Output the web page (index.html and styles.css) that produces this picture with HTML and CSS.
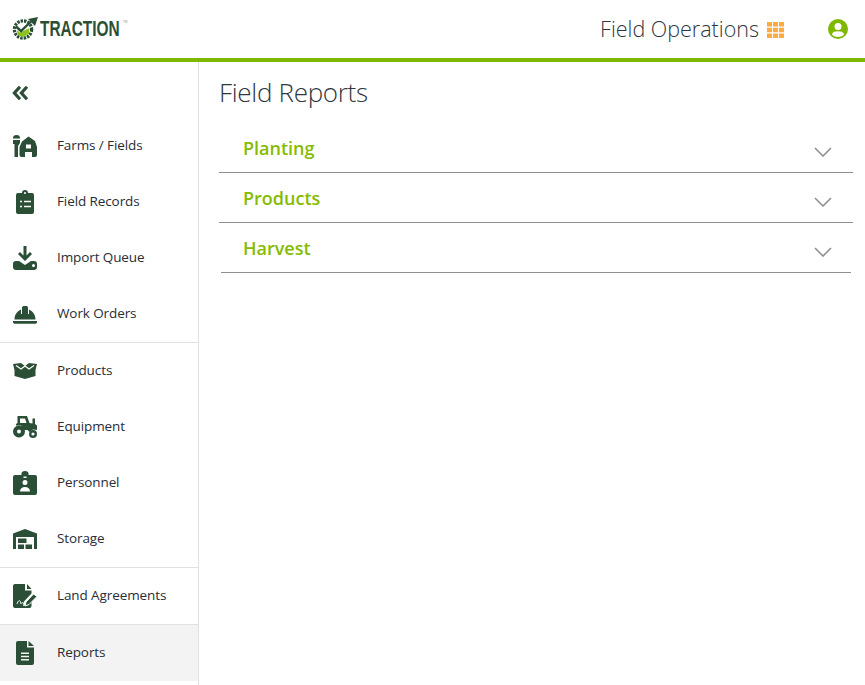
FILE: index.html
```html
<!DOCTYPE html>
<html lang="en">
<head>
    <meta charset="UTF-8">
    <meta name="viewport" content="width=device-width, initial-scale=1.0">
    <title>Field Reports</title>
    <link rel="stylesheet" href="styles.css">
</head>
<body>
    <header class="topbar">
        <div class="logo">
            <svg class="logo-mark" viewBox="0 0 27 23" width="27" height="23">
                <circle cx="11" cy="12.500" r="8.500" fill="none" stroke="#2b4f36" stroke-width="3.500" stroke-dasharray="2.400 1"/>
                <circle cx="11" cy="12.500" r="7" fill="#fff"/>
                <path d="M4.500 13 L8 15.500 L17.500 11 L17 17 L11 20 L6 18 Z" fill="#8cc21f"/>
                <path d="M4 9.500 L9 14 L19 4.500" fill="none" stroke="#2b4f36" stroke-width="2.400"/>
                <path d="M16 2 L26 0 L23 9 Z" fill="#2b4f36"/>
            </svg>
            <span class="logo-text">TRACTION</span><span class="logo-tm">TM</span>
        </div>
        <div class="topbar-right">
            <span class="app-name">Field Operations</span>
            <svg class="grid-icon" viewBox="0 0 17 16" width="17" height="16">
                <path fill="#fbab3f" d="M0 0h5v4.500H0zM6 0h5v4.500H6zM12 0h5v4.500h-5zM0 5.750h5v4.500H0zM6 5.750h5v4.500H6zM12 5.750h5v4.500h-5zM0 11.500h5V16H0zM6 11.500h5V16H6zM12 11.500h5V16h-5z"/>
            </svg>
            <svg class="user-icon" viewBox="0 0 20 20" width="20" height="20">
                <circle cx="10" cy="10" r="10" fill="#7fb800"/>
                <circle cx="10" cy="7.600" r="3.500" fill="#fff"/>
                <path d="M3.800 15.200C5 12.800 7 12.200 10 12.200s5 .6 6.200 3C14.800 16.900 12.600 18 10 18s-4.800-1.100-6.200-2.800z" fill="#fff"/>
            </svg>
        </div>
    </header>

    <div class="layout">
        <nav class="sidebar">
            <div class="collapse">
                <svg viewBox="0 0 17 14" width="17" height="14">
                    <path d="M8 .8 L2.400 7 L8 13.200 M15 .8 L9.400 7 L15 13.200" fill="none" stroke="#2b4f36" stroke-width="3.200"/>
                </svg>
            </div>

            <div class="nav-group">
                <a class="nav-item">
                    <svg class="nav-icon" viewBox="0 0 24 22">
                        <path d="M0 3a3.500 3 0 0 1 7 0v.500H0zM0 5h7v3L5 11v11H1.500V9H0z"/>
                        <path fill-rule="evenodd" d="M6.500 12L9 6.500 15.500 1.500 22 6 24 12v8a2 2 0 0 1-2 2h-3v-5h-7v5H8.500a2 2 0 0 1-2-2zM13 9.500h5v4h-5z"/>
                    </svg>
                    <span>Farms / Fields</span>
                </a>
                <a class="nav-item">
                    <svg class="nav-icon" viewBox="0 0 24 24">
                        <path fill-rule="evenodd" d="M5 3h4a3 3 0 0 1 6 0h4a2 2 0 0 1 2 2v17a2 2 0 0 1-2 2H5a2 2 0 0 1-2-2V5a2 2 0 0 1 2-2zm6 0a1 1 0 1 0 2 0 1 1 0 0 0-2 0zM7 11.500a1 1 0 1 0 2 0 1 1 0 0 0-2 0zM11 10.700v1.500h7v-1.500zM7 16.500a1 1 0 1 0 2 0 1 1 0 0 0-2 0zM11 15.700v1.500h7v-1.500z"/>
                    </svg>
                    <span>Field Records</span>
                </a>
                <a class="nav-item">
                    <svg class="nav-icon" viewBox="0 0 24 24">
                        <path d="M10.500 0h3v9.500l3.500-3.500 2 2-7 7-7-7 2-2 3.500 3.500z"/>
                        <path fill-rule="evenodd" d="M3 15h3l6 4 6-4h3a3 3 0 0 1 3 3v3a3 3 0 0 1-3 3H3a3 3 0 0 1-3-3v-3a3 3 0 0 1 3-3zm16 4.500a1.500 1.500 0 1 0 3 0 1.500 1.500 0 0 0-3 0z"/>
                    </svg>
                    <span>Import Queue</span>
                </a>
                <a class="nav-item">
                    <svg class="nav-icon" viewBox="0 0 24 24">
                        <path d="M1.500 17.500c0-5 3-8.500 6.500-10V12h1V5.500L10 4h4l1 1.500V12h1V7.500c3.500 1.500 6.500 5 6.500 10z"/>
                        <path d="M0 19h24v1c0 1-1 1.800-2 1.800H2C1 21.800 0 21 0 20z"/>
                    </svg>
                    <span>Work Orders</span>
                </a>
            </div>

            <div class="nav-group">
                <a class="nav-item">
                    <svg class="nav-icon" viewBox="0 0 24 24">
                        <path d="M0 5L8 4l4 3 4-3 8 1-1.500 6v6L12 20 1.500 17v-6z"/>
                        <path d="M3 6.500L8 10l4-3 4 3 5-3.500" fill="none" stroke="#fff" stroke-width="1.200"/>
                    </svg>
                    <span>Products</span>
                </a>
                <a class="nav-item">
                    <svg class="nav-icon" viewBox="0 0 24 24">
                        <path fill-rule="evenodd" d="M4.500 1h9.500l2.500 7 3 .5V3.500h2.500V9l2 1.500V15l-4-.5-3.500 2.500-2-2H11L8 10.500H3V9l1.500-1zM7 3.500V8h6.500L12 3.500z"/>
                        <circle cx="6" cy="16.500" r="4" fill="none" stroke="#2b4f36" stroke-width="4"/>
                        <circle cx="20" cy="19" r="2.800" fill="none" stroke="#2b4f36" stroke-width="2.400"/>
                    </svg>
                    <span>Equipment</span>
                </a>
                <a class="nav-item">
                    <svg class="nav-icon" viewBox="0 0 24 24">
                        <path fill-rule="evenodd" d="M2 4h6.500V2.500a3.500 2.500 0 0 1 7 0V4H22a2 2 0 0 1 2 2v16a2 2 0 0 1-2 2H2a2 2 0 0 1-2-2V6a2 2 0 0 1 2-2zm7.500 7.500a2.500 2.500 0 1 0 5 0 2.500 2.500 0 0 0-5 0zM7 20.500h10c0-3-2-4.500-5-4.500S7 17.500 7 20.500zM10.500 5.500h3V7h-3z"/>
                    </svg>
                    <span>Personnel</span>
                </a>
                <a class="nav-item">
                    <svg class="nav-icon" viewBox="0 0 24 24">
                        <path d="M12 2l12 4.500V22h-3V10H3v12H0V6.500z"/>
                        <path d="M5 11.500h8.500v4.500H5zM5 17.500h6V22H5zM12.500 17.500H19V22h-6.500z"/>
                    </svg>
                    <span>Storage</span>
                </a>
            </div>

            <div class="nav-group">
                <a class="nav-item">
                    <svg class="nav-icon" viewBox="0 0 24 24">
                        <path d="M2 0h10v6.500h6.500v3l-7.500 8-1 4.500 5-1.500 3.500-3.500V22a2 2 0 0 1-2 2H2a2 2 0 0 1-2-2V2a2 2 0 0 1 2-2zM14 0l4.500 5H14z"/>
                        <path d="M13 18l7.500-8 3.500 2.500-8 8-4 1.500z" stroke="#fff" stroke-width="1"/>
                        <path d="M4 20c1-3 2-4 3-3s0 3 1 2.500 1-1.500 3 0" fill="none" stroke="#fff" stroke-width="1"/>
                    </svg>
                    <span>Land Agreements</span>
                </a>
            </div>

            <div class="nav-group">
                <a class="nav-item active">
                    <svg class="nav-icon" viewBox="0 0 24 24">
                        <path fill-rule="evenodd" d="M5 0h9v6.500h7V22a2 2 0 0 1-2 2H5a2 2 0 0 1-2-2V2a2 2 0 0 1 2-2zM8 11.500v1.600h8v-1.600zM8 14.700v1.600h8v-1.600zM8 17.900v1.600h8v-1.600z"/>
                        <path d="M15.500 0L21 5h-5.500z"/>
                    </svg>
                    <span>Reports</span>
                </a>
            </div>
        </nav>

        <main class="content">
            <h1>Field Reports</h1>
            <div class="accordion">
                <div class="acc-row">
                    <span class="acc-title">Planting</span>
                    <svg class="chevron" viewBox="0 0 18 10" width="18" height="10"><path d="M1 1l8 8 8-8" fill="none" stroke="#8f8f8f" stroke-width="1.600"/></svg>
                </div>
                <div class="acc-row">
                    <span class="acc-title">Products</span>
                    <svg class="chevron" viewBox="0 0 18 10" width="18" height="10"><path d="M1 1l8 8 8-8" fill="none" stroke="#8f8f8f" stroke-width="1.600"/></svg>
                </div>
                <div class="acc-row acc-last">
                    <span class="acc-title">Harvest</span>
                    <svg class="chevron" viewBox="0 0 18 10" width="18" height="10"><path d="M1 1l8 8 8-8" fill="none" stroke="#8f8f8f" stroke-width="1.600"/></svg>
                </div>
            </div>
        </main>
    </div>
</body>
</html>
```

FILE: styles.css
```css
body {
    font-family: "Open Sans", "Lato", sans-serif;
    background-color: #fff;
    color: #2f3640;
    margin: 0;
    overflow: hidden;
}

.topbar {
    height: 58px;
    border-bottom: 4px solid #7fb800;
    display: flex;
    align-items: center;
    justify-content: space-between;
    padding: 0 17px 0 12px;
}

.logo {
    display: flex;
    align-items: center;
    color: #2b4f36;
}

.logo-mark {
    margin-bottom: 2px;
}

.logo-text {
    font-family: "Liberation Sans", sans-serif;
    font-size: 22px;
    font-weight: bold;
    display: inline-block;
    width: 82px;
    margin-left: 1px;
    transform: scaleX(0.7);
    transform-origin: left center;
}

.logo-tm {
    font-size: 3px;
    color: #888;
    margin: 0 0 14px 1px;
}

.topbar-right {
    display: flex;
    align-items: center;
}

.app-name {
    font-size: 21.5px;
    font-weight: 300;
    color: #2f3640;
    margin-top: -2px;
}

.grid-icon {
    margin-left: 8px;
    margin-top: 2px;
}

.user-icon {
    margin-left: 44px;
}

.layout {
    display: flex;
    height: 623px;
}

.sidebar {
    width: 198px;
    border-right: 1px solid #e0e0e0;
    flex-shrink: 0;
}

.collapse {
    height: 56px;
    display: flex;
    align-items: center;
    padding-left: 12px;
    padding-top: 6px;
    box-sizing: border-box;
}

.nav-group {
    border-bottom: 1px solid #e0e0e0;
}

.nav-group:last-child {
    border-bottom: none;
}

.nav-item {
    display: flex;
    align-items: center;
    height: 56px;
    padding-left: 13px;
    font-size: 13.5px;
    letter-spacing: -0.1px;
    color: #272d35;
}

.nav-item span {
    margin-top: -2px;
}

.nav-item.active {
    background: #f3f3f3;
}

.nav-icon {
    width: 24px;
    height: 24px;
    fill: #2b4f36;
    margin-right: 20px;
    flex-shrink: 0;
}

.content {
    flex: 1;
    padding: 0 12px 0 20px;
}

h1 {
    font-size: 26px;
    font-weight: 300;
    letter-spacing: -0.3px;
    color: #2f3640;
    margin: 13px 0 0;
    line-height: 34px;
}

.accordion {
    margin-top: 14px;
}

.acc-row {
    height: 49px;
    border-bottom: 1px solid #8f8f8f;
    display: flex;
    align-items: center;
    justify-content: space-between;
    padding: 0 21px 0 24px;
}

.acc-last {
    margin: 0 2px;
    padding: 0 19px 0 22px;
}

.acc-title {
    font-size: 18px;
    font-weight: 600;
    color: #85bc00;
}

.chevron {
    margin-top: 9px;
}
```
